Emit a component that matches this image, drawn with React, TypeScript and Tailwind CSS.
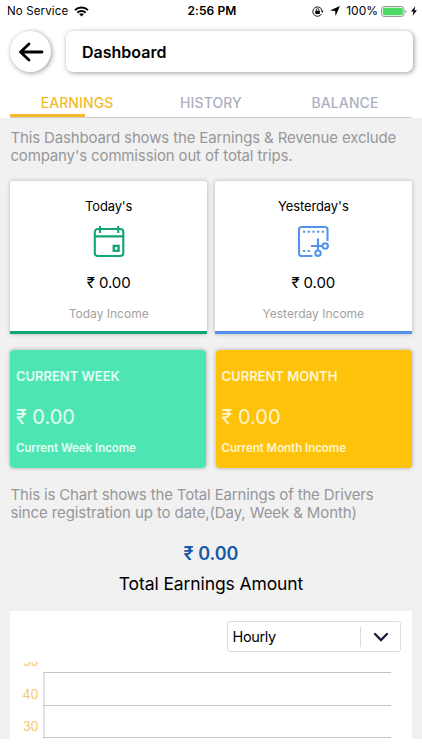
import { Fragment } from 'react';

const tabs = ['EARNINGS', 'HISTORY', 'BALANCE'];

const gridLines = [
  { label: '50', y: 10.5 },
  { label: '40', y: 43.5 },
  { label: '30', y: 75.5 },
];

function StatusBar() {
  return (
    <div className="flex h-[22px] items-center pr-[5px] pl-[7px] text-[11.5px]">
      <div className="flex flex-1 items-center gap-[6px]">
        <span className="pt-px tracking-[0.14px] whitespace-nowrap">No Service</span>
        <svg className="h-[11px] w-[15px]" viewBox="0 0 15 11" fill="none" stroke="#000" strokeWidth="2">
          <path d="M1 4.1a9.3 9.3 0 0 1 13 0" />
          <path d="M3.4 6.7a5.9 5.9 0 0 1 8.2 0" />
          <path d="M7.5 10.6 5.2 8.3a3.3 3.3 0 0 1 4.6 0Z" fill="#000" stroke="none" />
        </svg>
      </div>
      <span className="text-[12px] font-semibold tracking-[0.1px] whitespace-nowrap">2:56 PM</span>
      <div className="flex flex-1 items-center justify-end">
        {/* rotation lock */}
        <svg className="mr-[6px] h-[11px] w-[12px]" viewBox="0 0 12 11" fill="none" stroke="#000">
          <path d="M9.7 7.7A4.7 4.7 0 1 1 10 4.2" strokeWidth=".9" />
          <path d="m8.6 4.6 3.1.1-1.5 2Z" fill="#000" stroke="none" />
          <path d="M4.2 5V4a1.4 1.4 0 0 1 2.8 0v1" strokeWidth=".8" />
          <rect x="3.4" y="4.8" width="4.4" height="3.3" rx=".5" fill="#000" stroke="none" />
        </svg>
        <svg className="mr-[6px] h-[10px] w-[10px]" viewBox="0 0 10 10">
          <path d="M9.9.1 5.6 9.9 5.1 5 .1 4.5Z" />
        </svg>
        <span className="mr-[3px] text-[12px] whitespace-nowrap">100%</span>
        <svg className="mr-[4px] h-[11px] w-[26px]" viewBox="0 0 26 11" fill="none">
          <rect x=".5" y=".5" width="22.5" height="10" rx="2.6" stroke="#999" />
          <rect x="1.8" y="1.8" width="20" height="7.4" rx="1.3" fill="#4cd964" />
          <path d="M24.3 3.8v3.4a1.8 1.8 0 0 0 0-3.4Z" fill="#999" />
        </svg>
        <svg className="h-[10px] w-[6px]" viewBox="0 0 6 10">
          <path d="M4.3.2 0 5.5h2.5L1.6 9.8 6 4.3H3.4Z" />
        </svg>
      </div>
    </div>
  );
}

function CalendarIcon() {
  return (
    <svg className="h-8 w-8" viewBox="0 0 32 32" fill="none" stroke="#13a56f" strokeWidth="2.1">
      <rect x="1.8" y="4" width="28.5" height="27" rx="3" />
      <path d="M2 11.4h28.5M7 1v7M25.2 1v7" />
      <rect x="20.7" y="20.9" width="4.9" height="4.9" strokeWidth="2.3" />
    </svg>
  );
}

function CutIcon() {
  return (
    <svg className="h-8 w-8" viewBox="0 0 32 32" fill="none" stroke="#5592ee" strokeWidth="2.1">
      <path d="M15.5 31H4.5A2.5 2.5 0 0 1 2 28.5V4.500A2.500 2.500 0 0 1 4.500 2H28a2.500 2.500 0 0 1 2.500 2.500V16" />
      <path d="M6 6.700h21" strokeDasharray="2.200 2.500" />
      <path d="M6 26h8" strokeDasharray="2.200 2.500" />
      <path d="M21 13.500v12M14 21h11.500" />
      <circle cx="21" cy="28.200" r="2.700" />
      <circle cx="28.200" cy="21" r="2.700" />
    </svg>
  );
}

export default function App() {
  return (
    <div className="h-[750px] w-[422px] overflow-hidden bg-white font-[Inter,'Noto_Sans',sans-serif] text-black">
      <StatusBar />

      <div className="flex gap-[15px] pt-[9px] pr-[9px] pl-[10px]">
        <button className="flex h-[41px] w-[41px] items-center justify-center rounded-full bg-white shadow-[1px_1px_5px_rgba(0,0,0,0.4)]">
          <svg className="h-5 w-[26px]" viewBox="0 0 26 20" fill="none" stroke="#000" strokeWidth="2.800" strokeLinecap="round" strokeLinejoin="round">
            <path d="M24 10H2.500M11 2 2.500 10l8.500 8" />
          </svg>
        </button>
        <div className="flex h-[41px] flex-1 items-center rounded-[7px] bg-white pl-4 text-base font-semibold shadow-[1px_1px_5px_rgba(0,0,0,0.4)]">
          Dashboard
        </div>
      </div>

      <div className="mx-[10px] mt-[20px] grid h-[26px] grid-cols-3 border-b border-[#cfcfcf]">
        {tabs.map((tab, i) => (
          <div key={tab} className={i === 0 ? 'flex flex-col text-[#f3bb2c]' : 'flex flex-col text-[#adb0bf]'}>
            <span className="h-[22px] text-center text-[14px] leading-[22px] font-medium tracking-[0.1px]">{tab}</span>
            {i === 0 && <span className="h-[3px] w-[75px] bg-[#f3bb2c]" />}
          </div>
        ))}
      </div>

      <main className="h-[621px] overflow-hidden bg-[#f1f1f1] px-[10.4px] pt-[11px]">
        <p className="text-[15px] leading-[18px] tracking-[-0.145px] whitespace-nowrap text-[#97979a]">
          This Dashboard shows the Earnings &amp; Revenue exclude
          <br />
          company's commission out of total trips.
        </p>

        <div className="mt-4 grid grid-cols-2 gap-2 text-center">
          <div className="flex h-[153px] flex-col items-center rounded-t-[3px] border-b-[3px] border-[#13a56f] bg-white pt-[15px] shadow-[0_0_4px_rgba(0,0,0,0.25)]">
            <span className="text-[13px] leading-5 tracking-[-0.15px]">Today's</span>
            <div className="mt-[9px]"><CalendarIcon /></div>
            <span className="mt-[16px] text-[15px] leading-5 tracking-[-0.1px]">₹ 0.00</span>
            <span className="mt-[11px] text-[12px] leading-5 text-[#a2a2a2]">Today Income</span>
          </div>
          <div className="flex h-[153px] flex-col items-center rounded-t-[3px] border-b-[3px] border-[#5592ee] bg-white pt-[15px] shadow-[0_0_4px_rgba(0,0,0,0.25)]">
            <span className="text-[13px] leading-5 tracking-[-0.1px]">Yesterday's</span>
            <div className="mt-[9px]"><CutIcon /></div>
            <span className="mt-[16px] text-[15px] leading-5 tracking-[-0.1px]">₹ 0.00</span>
            <span className="mt-[11px] text-[12px] leading-5 text-[#a2a2a2]">Yesterday Income</span>
          </div>
        </div>

        <div className="mt-4 grid grid-cols-2 gap-[10px] whitespace-nowrap">
          <div className="flex h-[118px] flex-col rounded-[4px] bg-[#4de5b3] pt-4 pl-[5.5px] text-[#e2fff5] shadow-[0_0_4px_rgba(0,0,0,0.3)]">
            <span className="text-[13px] leading-5 font-semibold">CURRENT WEEK</span>
            <span className="mt-[19px] text-[20px] leading-6">₹ 0.00</span>
            <span className="mt-[9px] text-[11.5px] leading-5 font-semibold tracking-[-0.03px]">Current Week Income</span>
          </div>
          <div className="flex h-[118px] flex-col rounded-[4px] bg-[#fec20a] pt-4 pl-[5.5px] text-[#fff6d0] shadow-[0_0_4px_rgba(0,0,0,0.3)]">
            <span className="text-[13px] leading-5 font-semibold">CURRENT MONTH</span>
            <span className="mt-[19px] text-[20px] leading-6">₹ 0.00</span>
            <span className="mt-[9px] text-[11.5px] leading-5 font-semibold tracking-[-0.03px]">Current Month Income</span>
          </div>
        </div>

        <p className="mt-[18px] text-[15px] leading-[18px] tracking-[-0.15px] whitespace-nowrap text-[#97979a]">
          This is Chart shows the Total Earnings of the Drivers
          <br />
          <span className="tracking-[-0.1px]">since registration up to date,(Day, Week &amp; Month)</span>
        </p>

        <div className="mt-5 text-center text-[18px] leading-6 font-semibold text-[#145aa8]">₹ 0.00</div>
        <div className="mt-[6px] text-center text-[17.5px] leading-6 tracking-[-0.1px]">Total Earnings Amount</div>

        <section className="mt-[15px] h-[140px] bg-white pt-[10px]">
          <div className="mr-[11px] ml-auto flex h-[31px] w-[174px] items-center rounded-[3px] border border-[#dcdcdc]">
            <span className="flex-1 pl-[5px] text-[14.5px] tracking-[-0.4px]">Hourly</span>
            <span className="h-5 w-px bg-[#dcdcdc]" />
            <svg className="mr-[11px] ml-[12px] h-4 w-4" viewBox="0 0 16 16" fill="none" stroke="#171c38" strokeWidth="2.300" strokeLinecap="round">
              <path d="m2 5 6 6 6-6" />
            </svg>
          </div>

          <svg className="mt-[10px] h-[77px] w-[401px] overflow-hidden" viewBox="0 0 401 77">
            <path d="M34 10v67" stroke="#c2c5c4" />
            {gridLines.map((line) => (
              <Fragment key={line.label}>
                <path d={`M33.5 ${line.y}h347.5`} stroke="#c2c5c4" />
                <text x="28.5" y={line.y - 6.5} fontSize="12.5" textAnchor="end" fill="#f4c666">
                  {line.label}
                </text>
              </Fragment>
            ))}
          </svg>
        </section>
      </main>
    </div>
  );
}
